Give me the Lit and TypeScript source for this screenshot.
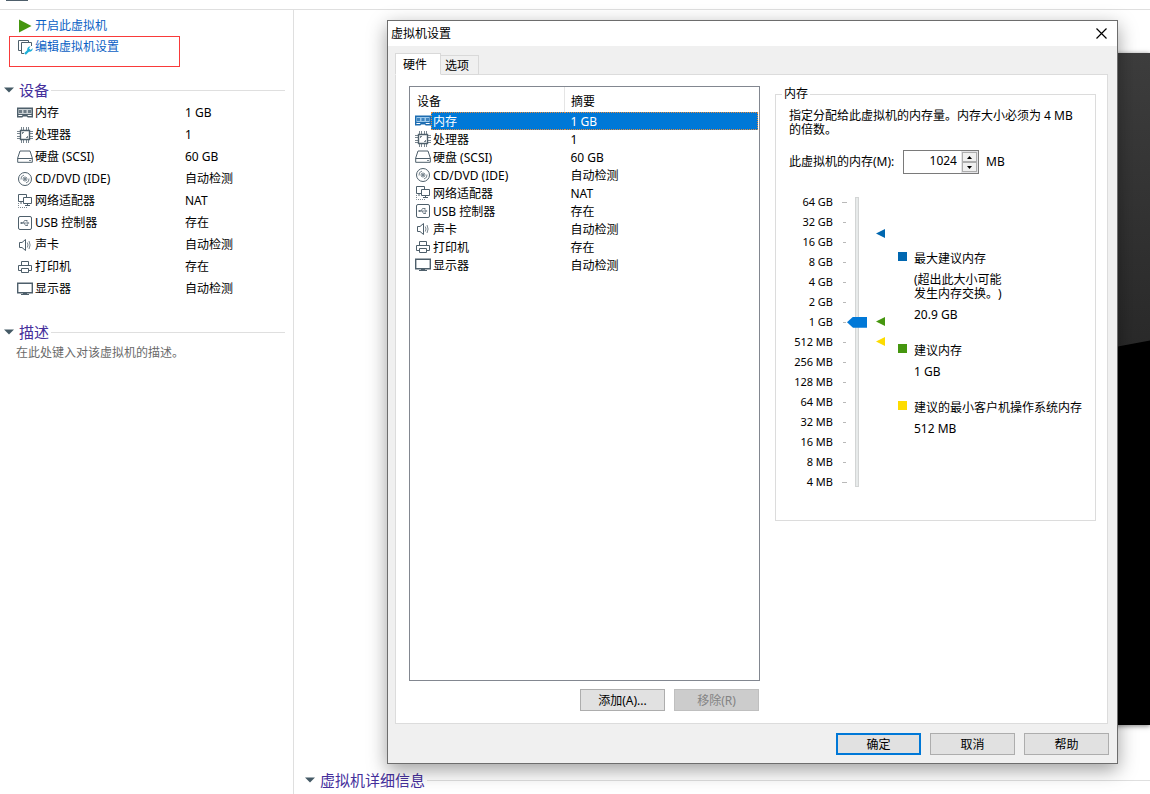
import { LitElement, html, css, svg, nothing } from "lit";
import { customElement, property, state } from "lit/decorators.js";
import { classMap } from "lit/directives/class-map.js";

type IconName = "memory" | "cpu" | "disk" | "disc" | "network" | "usb" | "sound" | "printer" | "display";

interface Device {
  icon: IconName;
  name: string;
  summary: string;
}

const DEVICES: Device[] = [
  { icon: "memory", name: "内存", summary: "1 GB" },
  { icon: "cpu", name: "处理器", summary: "1" },
  { icon: "disk", name: "硬盘 (SCSI)", summary: "60 GB" },
  { icon: "disc", name: "CD/DVD (IDE)", summary: "自动检测" },
  { icon: "network", name: "网络适配器", summary: "NAT" },
  { icon: "usb", name: "USB 控制器", summary: "存在" },
  { icon: "sound", name: "声卡", summary: "自动检测" },
  { icon: "printer", name: "打印机", summary: "存在" },
  { icon: "display", name: "显示器", summary: "自动检测" },
];

const SCALE = [
  "64 GB", "32 GB", "16 GB", "8 GB", "4 GB", "2 GB", "1 GB", "512 MB",
  "256 MB", "128 MB", "64 MB", "32 MB", "16 MB", "8 MB", "4 MB",
];

/* Recommended sizes, in MB, pinned beside the scale. */
const MARKS = [
  { kind: "max", size: 20.9 * 1024 },
  { kind: "good", size: 1024 },
  { kind: "min", size: 512 },
];

const ICONS = {
  memory: svg`
    <path class="tint" d="M1 4h14v6H1z"/>
    <path class="s wide" d="M.7 3.200h14.600v8.600h-4.300l-1-1H6l-1 1H.7z"/>
    <path class="f mid" d="M2 5h3v3H2zM6.500 5h3v3h-3zM11 5h3v3h-3z"/>
    <path class="f" d="M1 9h14v1H1z"/>`,
  cpu: svg`
    <path class="s wide" d="M3.500 3.500h9v9h-9z"/>
    <path class="s mid" d="M4.500 0v3M6.500 0v3M9.500 0v3M11.500 0v3M4.500 13v3M6.500 13v3M9.500 13v3M11.500 13v3M0 4.500h3M0 6.500h3M0 9.500h3M0 11.500h3M13 4.500h3M13 6.500h3M13 9.500h3M13 11.500h3"/>
    <path class="f mid" d="M5 5h2v1H5zM5 6h1v1H5zM9 10h2v1H9zM10 9h1v1h-1z"/>`,
  disk: svg`
    <path class="s" d="M3 2h10l2.300 7v4.300H.7V9z"/>
    <path class="s" d="M.7 9.500h14.600"/>
    <path class="f mid" d="M12 11h2v1h-2z"/>`,
  disc: svg`
    <circle class="s" cx="8" cy="8" r="6.500"/>
    <circle class="s mid" cx="8" cy="8" r="2"/>
    <path class="s mid" d="M4 8.500a4 4 0 0 1 3-4.400M12 7.500a4 4 0 0 1-3 4.400"/>
    <circle class="f" cx="8" cy="8" r="1"/>`,
  network: svg`
    <path class="s" d="M6 8.500H1.500v-7h8V4M4 8.500v2.500"/>
    <path class="s" d="M6.500 4.500h8v6h-8zM10.500 10.500v2.500M8 12.500h5"/>
    <path class="s mid dots" d="M1.500 10v4.500h9"/>`,
  usb: svg`
    <rect class="s" x="1.500" y="1.500" width="13" height="13" rx="1.500"/>
    <path class="s mid" d="M4 8h7M6 8l1.500-2.500h2M7 8l1.500 2.500h1.500"/>
    <path class="f mid" d="M3.500 7h2v2h-2zM10.500 6.500L12.500 8l-2 1.500zM9 5h1.500v1.500H9zM9.500 9.500H11V11H9.500z"/>`,
  sound: svg`
    <path class="s" d="M2.500 5.500h2.500l3.500-3v11l-3.500-3H2.500z"/>
    <path class="s mid" d="M10.300 5.500q1.400 2.500 0 5M12 4q2.200 4 0 8"/>`,
  printer: svg`
    <path class="s" d="M4.500 6.500v-4h7v4M4.500 11.500h-3v-5h13v5h-3"/>
    <path class="s" d="M4.500 9.500h7v4h-7z"/>`,
  display: svg`
    <path class="s wide" d="M.7 2.200h14.600v9.600H.7z"/>
    <path class="f" d="M4 13h8v1H4zM6 12h4v1H6z"/>`,
};

@customElement("device-icon")
class DeviceIcon extends LitElement {
  @property() name: IconName = "memory";
  @property({ type: Boolean, reflect: true }) active = false;

  static styles = css`
    :host {
      display: block;
      width: 16px;
      height: 16px;
      color: #4e5f6b;
    }
    :host([active]) {
      color: #1d6cb0;
    }
    svg {
      display: block;
    }
    .s {
      fill: none;
      stroke: currentColor;
    }
    .wide {
      stroke-width: 1.4;
    }
    .f {
      fill: currentColor;
    }
    .mid {
      opacity: 0.75;
    }
    .tint {
      fill: #c9d0d4;
    }
    :host([active]) .tint {
      fill: #9cc9ec;
    }
    .dots {
      stroke-dasharray: 1 1;
    }
  `;

  render() {
    return html`<svg width="16" height="16" viewBox="0 0 16 16" aria-hidden="true">${ICONS[this.name]}</svg>`;
  }
}

@customElement("section-title")
class SectionTitle extends LitElement {
  static styles = css`
    :host {
      display: block;
    }
    .title {
      display: flex;
      align-items: center;
      margin: 0;
      font-size: 15px;
      font-weight: 400;
      line-height: 22px;
      color: #45309c;
    }
    .title::after {
      content: "";
      flex: 1;
      height: 1px;
      margin-left: 2px;
      background: #dfdfdf;
    }
    .arrow {
      flex: none;
      margin-right: 5px;
      fill: #455a66;
    }
  `;

  render() {
    return html`
      <h2 class="title">
        <svg class="arrow" width="10" height="6" viewBox="0 0 10 6" aria-hidden="true"><path d="M0 .5h10L5 5.500z"/></svg>
        <slot></slot>
      </h2>
    `;
  }
}

@customElement("vm-sidebar")
class VmSidebar extends LitElement {
  static styles = css`
    :host {
      display: block;
      padding-top: 5px;
    }
    .command {
      display: flex;
      align-items: center;
      gap: 2px;
      width: max-content;
      height: 21px;
      margin-left: 17px;
      color: #0b5fc4;
      text-decoration: none;
    }
    .marked {
      width: 169px;
      height: 29px;
      margin: 0 0 12px 9px;
      border: 1px solid #f93a3a;
    }
    .marked .command {
      height: 19px;
      margin-left: 7px;
    }
    .section {
      margin: 0 8px 0 4px;
    }
    .devices {
      width: 100%;
      margin: 1px 0 21px;
      border-collapse: collapse;
      table-layout: fixed;
    }
    .devices th,
    .devices td {
      height: 22px;
      padding: 0;
      font-weight: 400;
      text-align: left;
    }
    .devices th {
      width: 181px;
    }
    .name {
      display: flex;
      align-items: center;
      gap: 2px;
      padding-left: 13px;
    }
    .note {
      margin: 0 0 0 12px;
      line-height: 20px;
      color: #6a6a6a;
    }
  `;

  render() {
    return html`
      <a class="command" href="#start">
        <svg width="16" height="16" viewBox="0 0 16 16" aria-hidden="true"><path fill="#45960f" d="M2 1.500L14.500 8 2 14.500z"/></svg>
        开启此虚拟机
      </a>
      <div class="marked">
        <a class="command" href="#settings">
          <svg width="16" height="16" viewBox="0 0 16 16" aria-hidden="true">
            <path fill="none" stroke="#4e5f6b" d="M4 11.500H1.500v-10h10V3M7 14.500H4.500v-11h10V7"/>
            <path fill="none" stroke="#1fb0d8" stroke-width="2.400" d="M8 15l4.500-4.500"/>
            <path fill="#1fb0d8" d="M10.500 11.500c-.8-2.200.8-4.300 3.200-4L12 9.300l1.700 1.700L15.600 9.200c.4 2.300-1.700 4-3.800 3.400z"/>
          </svg>
          编辑虚拟机设置
        </a>
      </div>
      <section class="section">
        <section-title>设备</section-title>
        <table class="devices">
          <tbody>
            ${DEVICES.map(
              (d) => html`
                <tr>
                  <th scope="row"><span class="name"><device-icon name=${d.icon}></device-icon>${d.name}</span></th>
                  <td>${d.summary}</td>
                </tr>
              `
            )}
          </tbody>
        </table>
      </section>
      <section class="section">
        <section-title>描述</section-title>
        <p class="note">在此处键入对该虚拟机的描述。</p>
      </section>
    `;
  }
}

@customElement("memory-group")
class MemoryGroup extends LitElement {
  /* Slider position: each step doubles the size, starting from 4 MB. */
  @state() step = 8;

  static styles = css`
    :host {
      display: block;
    }
    .group {
      margin: 0;
      padding: 7px 8px 28px 13px;
      border: 1px solid #dcdcdc;
    }
    .group legend {
      margin-left: -7px;
      padding: 0 2px;
      line-height: 16px;
    }
    .hint {
      margin: 0;
      line-height: 14px;
    }
    .size {
      display: flex;
      align-items: center;
      margin-top: 13px;
    }
    .size label {
      width: 114px;
    }
    .spin {
      display: flex;
      box-sizing: border-box;
      width: 76px;
      height: 24px;
      margin-right: 7px;
      border: 1px solid #7a7a7a;
    }
    .value {
      flex: 1;
      min-width: 0;
      padding: 0 4px 2px 0;
      border: 0;
      outline: 0;
      background: none;
      font: inherit;
      color: inherit;
      text-align: right;
      appearance: textfield;
    }
    .value::-webkit-inner-spin-button {
      display: none;
    }
    .steps {
      display: flex;
      flex-direction: column;
      width: 17px;
      padding: 1px;
      box-sizing: border-box;
      background: #e3e3e6;
    }
    .steps button {
      display: grid;
      flex: 1;
      place-items: center;
      min-height: 0;
      padding: 0;
      border: 1px solid #adadad;
      background: #f0f0f0;
    }
    .scale {
      display: grid;
      grid-template-columns: 44px 5px 20px 9px 1fr;
      margin-top: 18px;
    }
    .labels {
      margin: 0;
      padding: 0;
      list-style: none;
      font-size: 11px;
      line-height: 20px;
      text-align: right;
    }
    .ticks {
      display: grid;
      grid-auto-rows: 20px;
      align-items: center;
      justify-items: center;
      margin-left: 9px;
      width: 5px;
    }
    .tick {
      width: 3px;
      height: 1px;
      background: #b9b9b9;
    }
    .tick:first-child,
    .tick:last-child {
      width: 5px;
    }
    .slider {
      width: 20px;
      height: 290px;
      margin: 5px 0 0 9px;
      appearance: none;
      background: none;
      writing-mode: vertical-lr;
      direction: rtl;
    }
    .slider::-webkit-slider-runnable-track {
      box-sizing: border-box;
      width: 4px;
      height: 100%;
      border: 1px solid #d3d5d5;
      background: #e7eaea;
    }
    .slider::-webkit-slider-thumb {
      appearance: none;
      width: 20px;
      height: 11px;
      margin-left: -9px;
      background: #0078d7;
      clip-path: polygon(30% 0, 100% 0, 100% 100%, 30% 100%, 0 50%);
    }
    .marks {
      position: relative;
      width: 9px;
      margin-left: 18px;
    }
    .mark {
      position: absolute;
      width: 9px;
      height: 9px;
      margin-top: -5px;
      clip-path: polygon(100% 0, 100% 100%, 0 50%);
    }
    .max {
      background: #0067b0;
    }
    .good {
      background: #45960f;
    }
    .min {
      background: #fddc00;
    }
    .advice {
      display: grid;
      grid-template-columns: 9px 1fr;
      align-content: start;
      gap: 7px;
      margin: 60px 0 0 31px;
      line-height: 14px;
    }
    .swatch {
      width: 9px;
      height: 9px;
    }
    .text {
      display: grid;
      gap: 7px;
      max-width: 170px;
      margin-bottom: 15px;
      text-spacing-trim: space-all;
    }
    .text p {
      margin: 0;
    }
    .text .warning {
      max-width: 96px;
    }
  `;

  private move(by: number) {
    this.step = Math.min(14, Math.max(0, this.step + by));
  }

  render() {
    return html`
      <fieldset class="group">
        <legend>内存</legend>
        <p class="hint">指定分配给此虚拟机的内存量。内存大小必须为 4 MB 的倍数。</p>
        <div class="size">
          <label for="size">此虚拟机的内存(M):</label>
          <span class="spin">
            <input class="value" id="size" type="number" step="4" .value=${String(4 * 2 ** this.step)} />
            <span class="steps">
              <button type="button" aria-label="增加" @click=${() => this.move(1)}>
                <svg width="5" height="3" viewBox="0 0 5 3" aria-hidden="true"><path d="M0 3h5L2.500 0z"/></svg>
              </button>
              <button type="button" aria-label="减少" @click=${() => this.move(-1)}>
                <svg width="5" height="3" viewBox="0 0 5 3" aria-hidden="true"><path d="M0 0h5L2.500 3z"/></svg>
              </button>
            </span>
          </span>
          MB
        </div>
        <div class="scale">
          <ul class="labels">${SCALE.map((s) => html`<li>${s}</li>`)}</ul>
          <div class="ticks">${SCALE.map(() => html`<span class="tick"></span>`)}</div>
          <input
            class="slider"
            type="range"
            min="0"
            max="14"
            aria-label="内存"
            .value=${String(this.step)}
            @input=${(e: Event) => (this.step = Number((e.target as HTMLInputElement).value))}
          />
          <div class="marks">
            ${MARKS.map(
              (m) => html`<span class="mark ${m.kind}" style="top:${Math.round(10 + 20 * Math.log2(65536 / m.size))}px"></span>`
            )}
          </div>
          <div class="advice">
            <span class="swatch max"></span>
            <div class="text"><p>最大建议内存</p><p class="warning">(超出此大小可能发生内存交换。)</p><p>20.9 GB</p></div>
            <span class="swatch good"></span>
            <div class="text"><p>建议内存</p><p>1 GB</p></div>
            <span class="swatch min"></span>
            <div class="text"><p>建议的最小客户机操作系统内存</p><p>512 MB</p></div>
          </div>
        </div>
      </fieldset>
    `;
  }
}

@customElement("settings-dialog")
class SettingsDialog extends LitElement {
  @state() selected = 0;

  static styles = css`
    :host {
      display: flex;
      flex-direction: column;
      box-sizing: border-box;
      border: 1px solid #6d6d6d;
      background: #f0f0f0;
      box-shadow: 0 6px 18px rgba(0, 0, 0, 0.38);
      color: #000;
    }
    .bar {
      display: flex;
      align-items: center;
      justify-content: space-between;
      height: 25px;
      padding: 0 10px 0 3px;
      background: #fff;
    }
    .bar h1 {
      margin: 0;
      font-size: 12px;
      font-weight: 400;
    }
    .close {
      display: block;
      padding: 0;
      border: 0;
      background: none;
    }
    .close svg {
      display: block;
    }
    .tabs {
      display: flex;
      align-items: flex-end;
      margin: 7px 9px -1px 7px;
      z-index: 1;
    }
    .tab {
      height: 20px;
      padding: 2px 9px 0 4px;
      border: 1px solid #d9d9d9;
      border-left: 0;
      background: #f0f0f0;
      font: inherit;
      color: inherit;
    }
    .current {
      height: 22px;
      padding: 1px 13px 0 7px;
      border-left: 1px solid #d9d9d9;
      border-bottom-color: #fff;
      background: #fff;
    }
    .panel {
      display: flex;
      flex: 1;
      gap: 15px;
      margin: 0 9px 0 7px;
      padding: 11px 11px 12px 13px;
      border: 1px solid #dcdcdc;
      background: #fff;
    }
    .hardware {
      display: flex;
      flex: 1;
      flex-direction: column;
      gap: 8px;
    }
    .list {
      flex: 1;
      border: 1px solid #828790;
      padding-right: 1px;
    }
    .table {
      width: 100%;
      border-collapse: collapse;
      table-layout: fixed;
    }
    .table th,
    .table td {
      height: 18px;
      padding: 0;
      font-weight: 400;
      line-height: 16px;
      text-align: left;
    }
    .table thead th {
      height: 21px;
      padding: 4px 0 0 7px;
    }
    .first {
      width: 147px;
    }
    .table thead .second {
      padding-left: 6px;
      border-left: 1px solid #e5e5e5;
    }
    .name {
      display: flex;
      align-items: center;
      padding-left: 5px;
    }
    .label,
    .summary span {
      box-sizing: border-box;
      height: 18px;
      border: 1px solid transparent;
      line-height: 18px;
    }
    .label {
      flex: 1;
      border-right: 0;
      padding-left: 1px;
    }
    .summary span {
      display: block;
      padding-left: 6px;
      border-left: 0;
    }
    .picked .label,
    .picked .summary span {
      background: #0078d7;
      border-color: #e58a3c;
      border-style: dotted;
      color: #fff;
    }
    .actions,
    .footer {
      display: flex;
      justify-content: flex-end;
      gap: 9px;
    }
    .actions {
      padding-right: 1px;
    }
    .footer {
      padding: 9px 8px 8px;
    }
    .button {
      width: 85px;
      height: 22px;
      padding: 1px 0 0;
      border: 1px solid #adadad;
      background: #e1e1e1;
      font: inherit;
      color: inherit;
    }
    .button:disabled {
      border-color: #bfbfbf;
      background: #ccc;
      color: #838383;
    }
    .default {
      border: 2px solid #0078d7;
    }
    .memory {
      flex: 0 0 321px;
      align-self: flex-start;
    }
  `;

  render() {
    return html`
      <header class="bar">
        <h1>虚拟机设置</h1>
        <button class="close" type="button" aria-label="关闭">
          <svg width="11" height="11" viewBox="0 0 11 11" aria-hidden="true"><path fill="none" stroke="#000" stroke-width="1.200" d="M.5.5l10 10M10.500.5l-10 10"/></svg>
        </button>
      </header>
      <div class="tabs" role="tablist">
        <button class="tab current" type="button" role="tab" aria-selected="true">硬件</button>
        <button class="tab" type="button" role="tab" aria-selected="false">选项</button>
      </div>
      <div class="panel">
        <div class="hardware">
          <div class="list">
            <table class="table">
              <thead>
                <tr><th class="first" scope="col">设备</th><th class="second" scope="col">摘要</th></tr>
              </thead>
              <tbody>
                ${DEVICES.map(
                  (d, i) => html`
                    <tr class=${classMap({ picked: i === this.selected })} @click=${() => (this.selected = i)}>
                      <td>
                        <span class="name">
                          <device-icon name=${d.icon} ?active=${i === this.selected}></device-icon>
                          <span class="label">${d.name}</span>
                        </span>
                      </td>
                      <td class="summary"><span>${d.summary}</span></td>
                    </tr>
                  `
                )}
              </tbody>
            </table>
          </div>
          <div class="actions">
            <button class="button" type="button">添加(A)...</button>
            <button class="button" type="button" disabled>移除(R)</button>
          </div>
        </div>
        ${this.selected === 0 ? html`<memory-group class="memory"></memory-group>` : nothing}
      </div>
      <footer class="footer">
        <button class="button default" type="button">确定</button>
        <button class="button" type="button">取消</button>
        <button class="button" type="button">帮助</button>
      </footer>
    `;
  }
}

@customElement("app-root")
class AppRoot extends LitElement {
  static styles = css`
    :host {
      display: flex;
      flex-direction: column;
      position: relative;
      min-height: 100vh;
      overflow: hidden;
      background: #fff;
      font-family: "Noto Sans", "Noto Sans CJK SC", sans-serif;
      font-size: 12px;
      line-height: 16px;
      color: #000;
    }
    .strip {
      height: 9px;
      padding-left: 6px;
      border-bottom: 1px solid #dfdfdf;
    }
    .underline {
      width: 22px;
      height: 1px;
      background: #4e5f6b;
    }
    .columns {
      display: flex;
      flex: 1;
    }
    .sidebar {
      width: 293px;
      border-right: 1px solid #dfdfdf;
    }
    .main {
      flex: 1;
      padding-top: 43px;
    }
    .preview {
      display: block;
      width: calc(100% - 406px);
      height: 672px;
      margin: 0 0 44px 406px;
      box-shadow: 0 1px 5px rgba(0, 0, 0, 0.5);
    }
    .details {
      margin-left: 11px;
    }
    .window {
      position: absolute;
      inset: 20px 32px 30px 387px;
    }
  `;

  render() {
    return html`
      <div class="strip"><div class="underline"></div></div>
      <div class="columns">
        <vm-sidebar class="sidebar"></vm-sidebar>
        <main class="main">
          <svg class="preview" viewBox="0 0 450 673" preserveAspectRatio="none" aria-hidden="true">
            <defs>
              <linearGradient id="sky" x1="0" y1="0" x2="0" y2="1">
                <stop offset="0" stop-color="#3d3d3d" />
                <stop offset="1" stop-color="#242424" />
              </linearGradient>
            </defs>
            <path fill="#000" d="M0 0h450v673H0z" />
            <path fill="url(#sky)" d="M0 0h450v288L0 372z" />
          </svg>
          <section-title class="details">虚拟机详细信息</section-title>
        </main>
      </div>
      <settings-dialog class="window"></settings-dialog>
    `;
  }
}
